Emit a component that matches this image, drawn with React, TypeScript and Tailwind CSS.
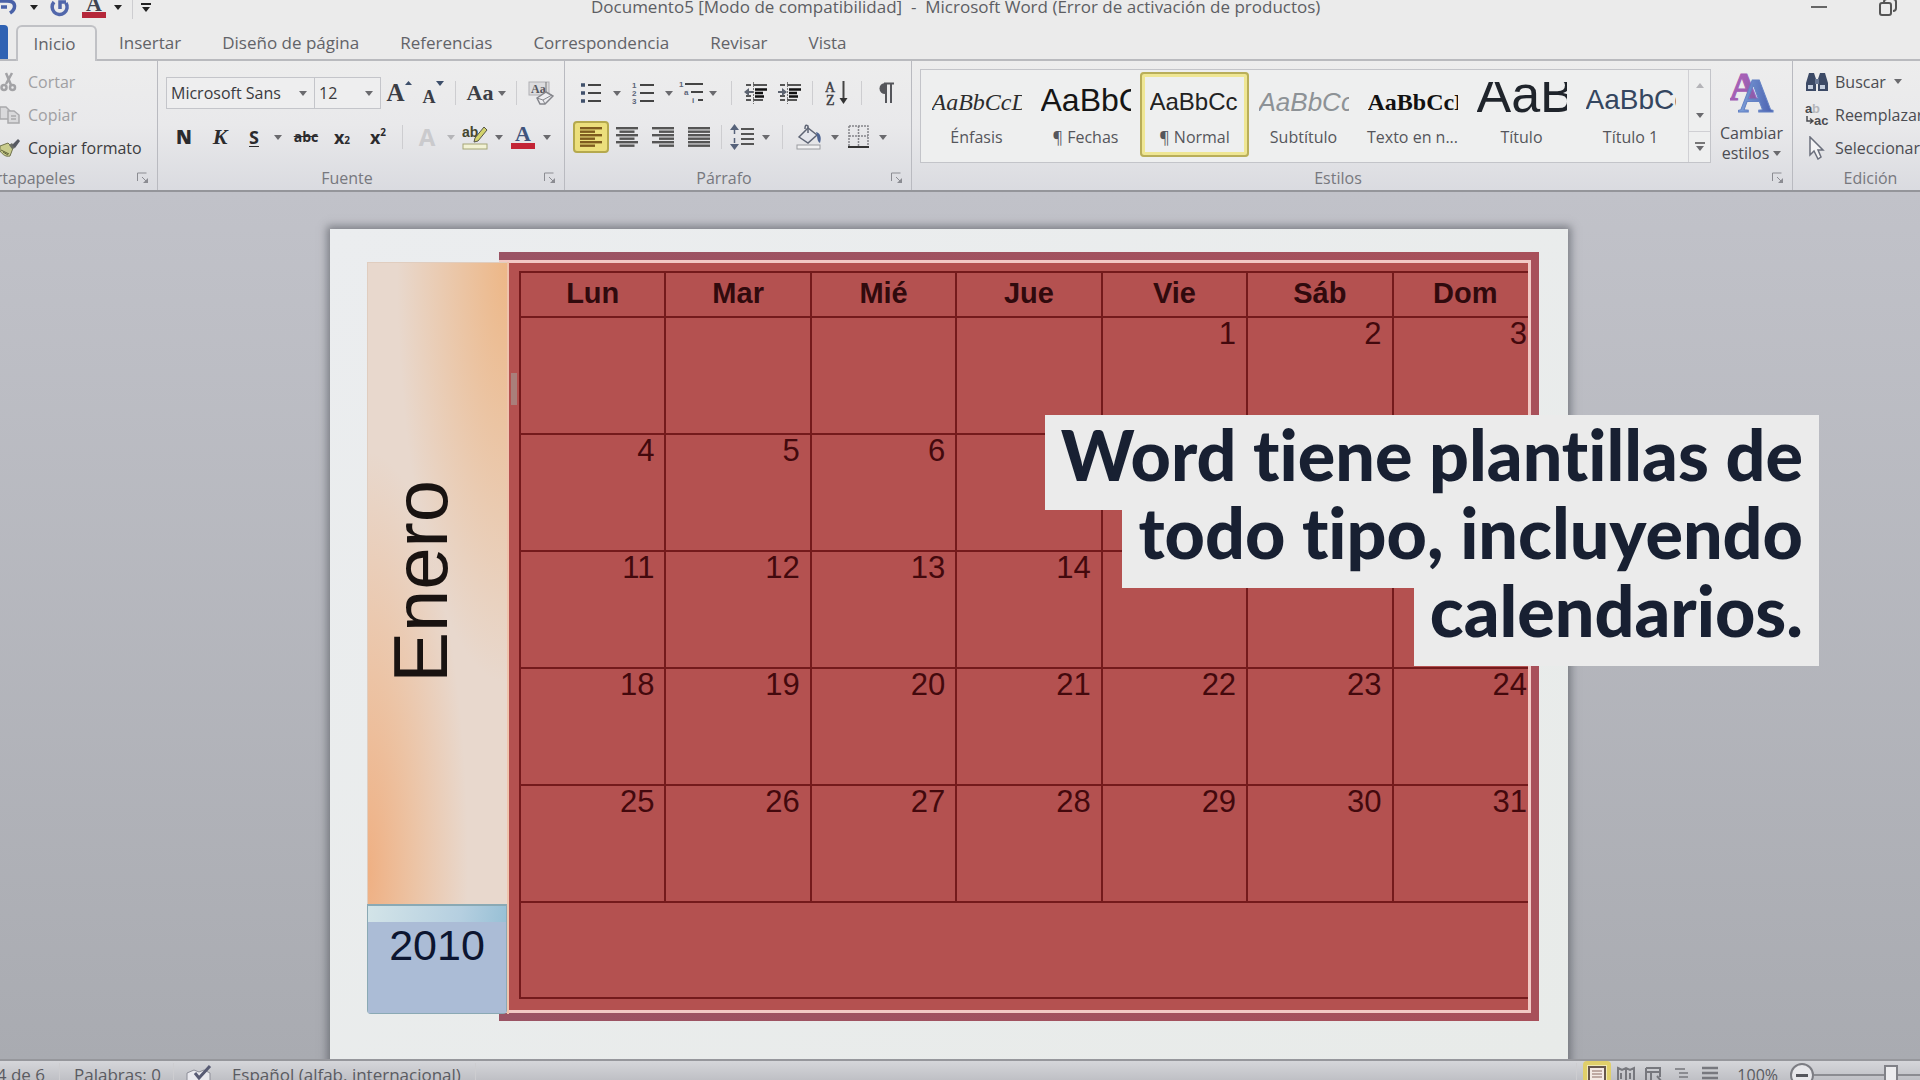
import type { ReactNode } from "react";
import clsx from "clsx";

const week = ["Lun", "Mar", "Mié", "Jue", "Vie", "Sáb", "Dom"];
const firstOffset = 4;
const rows = Array.from({ length: 5 }, (_, r) =>
  Array.from({ length: 7 }, (_, c) => {
    const day = r * 7 + c - firstOffset + 1;
    return day > 0 ? String(day) : "";
  })
);

const tabs = ["Insertar", "Diseño de página", "Referencias", "Correspondencia", "Revisar", "Vista"];

const styles = [
  { name: "Énfasis", sample: "AaBbCcDd", look: "font-['Liberation_Serif',serif] italic text-[24px] leading-10 text-[#2c2c2c]" },
  { name: "¶ Fechas", sample: "AaBbCc", look: "text-[32px] leading-9 text-[#151515]" },
  { name: "¶ Normal", sample: "AaBbCc", look: "text-[24px] leading-10 text-[#222]", active: true },
  { name: "Subtítulo", sample: "AaBbCc", look: "italic text-[26px] leading-10 text-[#8d9296]" },
  { name: "Texto en n...", sample: "AaBbCcDd", look: "font-['Liberation_Serif',serif] font-bold text-[24px] leading-10 text-[#111]" },
  { name: "Título", sample: "AaBb", look: "text-[52px] leading-6 text-[#1f242b]" },
  { name: "Título 1", sample: "AaBbCc", look: "text-[28px] leading-9 text-[#34465f]" },
];

function Arrow({ className = "text-[#6a6a6e]" }: { className?: string }) {
  return (
    <svg viewBox="0 0 8 5" className={clsx("w-2 h-[5px] shrink-0", className)} fill="currentColor" aria-hidden="true">
      <path d="M0 0h8L4 5z" />
    </svg>
  );
}

function Tool({ label, className = "w-9", active, children }: { label: string; className?: string; active?: boolean; children: ReactNode }) {
  return (
    <button
      aria-label={label}
      className={clsx(
        "h-8 shrink-0 flex items-center justify-center rounded-sm",
        active && "border-2 border-[#b5a94e] bg-[#ecdf7c]",
        className
      )}
    >
      {children}
    </button>
  );
}

function Split({ label, className = "w-12", arrow, children }: { label: string; className?: string; arrow?: string; children: ReactNode }) {
  return (
    <button aria-label={label} className={clsx("h-8 shrink-0 flex items-center", className)}>
      <span className="flex-1 flex items-center justify-center">{children}</span>
      <span className="w-4 flex justify-center">
        <Arrow className={arrow} />
      </span>
    </button>
  );
}

function Sep({ className = "mx-2" }: { className?: string }) {
  return <span className={clsx("w-px h-6 shrink-0 bg-[#cdcdd0]", className)} />;
}

function Group({ title, className, children }: { title: string; className: string; children: ReactNode }) {
  return (
    <section aria-label={title} className={clsx("flex flex-col border-r border-[#b9bac0] overflow-hidden", className)}>
      <div className="flex-1">{children}</div>
      <div className="h-6 shrink-0 flex items-center">
        <span className="flex-1 text-center text-[#77787e]">{title}</span>
        <Launcher title={title} />
      </div>
    </section>
  );
}

function Launcher({ title }: { title: string }) {
  return (
    <button aria-label={"Opciones de " + title} className="w-7 flex justify-center shrink-0">
      <svg viewBox="0 0 12 12" className="w-3 h-3" fill="none" stroke="#8b8c92" aria-hidden="true">
        <path d="M.5 9V1h9M5 5l4 4" />
        <path d="M11 6v5H6z" fill="#8b8c92" stroke="none" />
      </svg>
    </button>
  );
}

function Lines({ kind, color = "#555" }: { kind: "left" | "center" | "right" | "full"; color?: string }) {
  return (
    <svg viewBox="0 0 22 20" className="w-[22px] h-5" fill={color} aria-hidden="true">
      {[0, 1, 2, 3, 4, 5].map((i) => {
        const w = kind === "full" || i % 2 === 0 ? 22 : 15;
        const x = kind === "right" ? 22 - w : kind === "center" ? (22 - w) / 2 : 0;
        return <rect key={i} x={x} y={i * 3.5} width={w} height="2.4" />;
      })}
    </svg>
  );
}

function Indent({ out }: { out?: boolean }) {
  return (
    <svg viewBox="0 0 24 24" className="w-6 h-6" aria-hidden="true">
      <path d="M2 4h5M9 4h14M2 19h5M9 19h10M2 15h5" stroke="#555" strokeWidth="2" />
      <path d="M11 8.500h12M11 12h8M11 15.500h9" stroke="#111" strokeWidth="2.500" />
      <path d="M9.500 1v22" stroke="#777" strokeDasharray="2 1" />
      <path d={out ? "M0 11l5-4v3h4v2H5v3z" : "M9 11L4 7v3H0v2h4v3z"} fill="#5c6370" />
    </svg>
  );
}

function Clipboard() {
  return (
    <section aria-label="Portapapeles" className="w-[158px] shrink-0 flex flex-col border-r border-[#b9bac0] overflow-hidden">
      <div className="flex-1 pt-1">
        <button className="h-[33px] flex items-center gap-2 text-[#a0a0a3]">
          <svg viewBox="0 0 20 20" className="w-5 h-5" fill="none" stroke="#a3a3a6" strokeWidth="2.500" aria-hidden="true">
            <path d="M6 1l5 12M12 1L6 12" />
            <circle cx="4" cy="15.500" r="2.500" />
            <circle cx="12.500" cy="15.500" r="2.500" />
          </svg>
          Cortar
        </button>
        <button className="h-[33px] flex items-center gap-2 text-[#a0a0a3]">
          <svg viewBox="0 0 20 20" className="w-5 h-5" fill="#d9d9db" stroke="#a9a9ac" strokeWidth="1.500" aria-hidden="true">
            <path d="M0 2h6l4 4v8H0z" />
            <path d="M8 6h6l5 4v8H8zM11 11h5M11 14h5" />
          </svg>
          Copiar
        </button>
        <button className="h-[33px] flex items-center gap-2 text-[#3c3c40]">
          <svg viewBox="0 0 20 20" className="w-5 h-5" aria-hidden="true">
            <path d="M0 8l8-3 5 5-3 8c-4 1-7-1-10-5z" fill="#c9cc8d" stroke="#70724c" />
            <path d="M1 12l8 4M3 14l5 3" stroke="#5d6135" />
            <path d="M9 7l3 4 3-1-3-5z" fill="#6a6d64" />
            <path d="M12 7l6-6 2 2-5 7z" fill="#565960" />
          </svg>
          Copiar formato
        </button>
      </div>
      <div className="h-6 flex items-center justify-between">
        <span className="w-[75px] flex justify-end text-[#77787e]">Portapapeles</span>
        <Launcher title="Portapapeles" />
      </div>
    </section>
  );
}

function FontGroup() {
  return (
    <Group title="Fuente" className="w-[407px] shrink-0">
      <div className="pt-4 pl-2 flex flex-col gap-3">
        <div className="flex items-center">
          <div className="relative w-[149px]">
            <select aria-label="Fuente" className="appearance-none w-full h-8 pl-1 border border-[#c4c5ca] bg-[#eeeeef] text-[#3a3a3e]">
              <option>Microsoft Sans</option>
            </select>
            <span className="absolute right-2 top-3.5 pointer-events-none">
              <Arrow />
            </span>
          </div>
          <div className="relative w-[66px]">
            <select aria-label="Tamaño" className="appearance-none w-full h-8 pl-1 border border-l-0 border-[#c4c5ca] bg-[#eeeeef] text-[#3a3a3e]">
              <option>12</option>
            </select>
            <span className="absolute right-2 top-3.5 pointer-events-none">
              <Arrow />
            </span>
          </div>
          <Tool label="Agrandar fuente">
            <span className="font-['Liberation_Serif',serif] font-bold text-[25px] leading-6 text-[#3b3d44]">A</span>
            <span className="self-start pt-1 text-[#3d4f6b]">
              <svg viewBox="0 0 7 4" className="w-[7px] h-1" fill="currentColor" aria-hidden="true">
                <path d="M0 4h7L3.500 0z" />
              </svg>
            </span>
          </Tool>
          <Tool label="Encoger fuente" className="w-8">
            <span className="font-['Liberation_Serif',serif] font-bold text-[18px] leading-6 pt-2 text-[#3b3d44]">A</span>
            <span className="self-start pt-1">
              <Arrow className="text-[#3d4f6b]" />
            </span>
          </Tool>
          <Sep className="mx-1.5" />
          <Split label="Cambiar mayúsculas">
            <span className="pl-1 font-['Liberation_Serif',serif] font-bold text-[22px] text-[#3b3d44]">Aa</span>
          </Split>
          <Sep className="mx-1.5" />
          <Tool label="Borrar formato" className="w-9">
            <svg viewBox="0 0 26 26" className="w-6.5 h-6.5" aria-hidden="true">
              <rect x="1" y="2" width="20" height="13" fill="#dcdcde" stroke="#b0b0b4" />
              <text x="3" y="13" fontSize="12" fontWeight="bold" fontFamily="Liberation Serif, serif" fill="#55565c">Aa</text>
              <path d="M18 2v12" stroke="#777" />
              <path d="M9 18l9-6 7 4-8 8h-5z" fill="#ededf0" stroke="#85868c" strokeWidth="1.500" />
              <path d="M9 18l6 2 2 4M15 20l9-5" fill="none" stroke="#85868c" />
            </svg>
          </Tool>
        </div>
        <div className="flex items-center text-[#2b2b2e]">
          <Tool label="Negrita">
            <b className="font-['Open_Sans',sans-serif] font-extrabold text-[19px]">N</b>
          </Tool>
          <Tool label="Cursiva">
            <i className="font-['Liberation_Serif',serif] font-bold text-[22px]">K</i>
          </Tool>
          <Split label="Subrayado">
            <u className="font-bold text-[18px] underline-offset-2">S</u>
          </Split>
          <Tool label="Tachado">
            <s className="pl-1 font-bold text-[14px]">abc</s>
          </Tool>
          <Tool label="Subíndice">
            <b className="pl-1 text-[18px]">x</b>
            <b className="text-[10px] self-end pb-0.5">2</b>
          </Tool>
          <Tool label="Superíndice">
            <b className="pl-1 text-[18px]">x</b>
            <b className="text-[10px] self-start">2</b>
          </Tool>
          <Sep />
          <Split label="Efectos de texto" arrow="text-[#b5b5b8]">
            <b className="text-[24px] leading-8 text-[#cacacd]">A</b>
          </Split>
          <Split label="Color de resaltado">
            <svg viewBox="0 0 26 26" className="w-6.5 h-6.5" aria-hidden="true">
              <text x="0" y="13" fontSize="14" fontWeight="bold" fontFamily="Liberation Sans, sans-serif" fill="#44462f">ab</text>
              <path d="M22 3l3 3-9 11-4 1 1-4z" fill="#d3d36c" stroke="#55554a" />
              <rect x="1" y="20" width="24" height="5" fill="#f2f2d4" stroke="#a5a677" />
            </svg>
          </Split>
          <Split label="Color de fuente">
            <svg viewBox="0 0 26 26" className="w-6.5 h-6.5" aria-hidden="true">
              <text x="13" y="17" fontSize="22" fontWeight="bold" textAnchor="middle" fontFamily="Liberation Serif, serif" fill="#40547c">A</text>
              <rect x="1" y="19" width="24" height="6" fill="#c32436" />
            </svg>
          </Split>
        </div>
      </div>
    </Group>
  );
}

function ParagraphGroup() {
  return (
    <Group title="Párrafo" className="w-[347px] shrink-0">
      <div className="pt-4 pl-2 flex flex-col gap-3">
        <div className="flex items-center">
          <Split label="Viñetas" className="w-13">
            <svg viewBox="0 0 22 22" className="w-5.5 h-5.5" aria-hidden="true">
              <path d="M8 3h13M8 11h13M8 19h13" stroke="#444" strokeWidth="2" />
              <path d="M1 3h4M1 11h4M1 19h4" stroke="#40506b" strokeWidth="3.500" />
            </svg>
          </Split>
          <Split label="Numeración" className="w-13">
            <svg viewBox="0 0 24 24" className="w-6 h-6" aria-hidden="true">
              <path d="M9 4h14M9 12h14M9 20h14" stroke="#444" strokeWidth="2" />
              <g fontSize="8" fontWeight="bold" fontFamily="Liberation Sans, sans-serif" fill="#5b6479">
                <text x="1" y="7">1</text>
                <text x="1" y="15">2</text>
                <text x="1" y="23">3</text>
              </g>
            </svg>
          </Split>
          <Split label="Lista multinivel" className="w-11">
            <svg viewBox="0 0 24 24" className="w-6 h-6" aria-hidden="true">
              <path d="M6 3h18M12 11h12M19 19h5" stroke="#444" strokeWidth="2" />
              <g fontSize="8" fontWeight="bold" fontFamily="Liberation Sans, sans-serif" fill="#5b6479">
                <text x="0" y="6">1</text>
                <text x="5" y="14">a</text>
                <text x="13" y="22">i</text>
              </g>
            </svg>
          </Split>
          <Sep className="ml-2.5 mr-1.5" />
          <Tool label="Disminuir sangría">
            <Indent out />
          </Tool>
          <Tool label="Aumentar sangría" className="w-8">
            <Indent />
          </Tool>
          <Sep className="mx-1.5" />
          <Tool label="Ordenar">
            <svg viewBox="0 0 24 26" className="w-6 h-6.5" aria-hidden="true">
              <g fontSize="14" fontFamily="Liberation Serif, serif" fill="#3d3d44" stroke="#3d3d44" strokeWidth=".4">
                <text x="0" y="12">A</text>
                <text x="1" y="25">Z</text>
              </g>
              <path d="M18.500 1v19" stroke="#444" strokeWidth="2" />
              <path d="M14.500 18h8l-4 6z" fill="#333" />
            </svg>
          </Tool>
          <Sep className="mx-1.5" />
          <Tool label="Mostrar todo" className="w-9">
            <svg viewBox="0 0 18 22" className="w-4.5 h-5.5" aria-hidden="true">
              <path d="M8 1a5.500 5.500 0 000 11z" fill="#55565b" />
              <path d="M7 1.500h10M9 1v20M14 1v20" stroke="#55565b" strokeWidth="2" />
            </svg>
          </Tool>
        </div>
        <div className="flex items-center">
          <Tool label="Alinear a la izquierda" active>
            <Lines kind="left" color="#7f5c1f" />
          </Tool>
          <Tool label="Centrar">
            <Lines kind="center" />
          </Tool>
          <Tool label="Alinear a la derecha">
            <Lines kind="right" />
          </Tool>
          <Tool label="Justificar">
            <Lines kind="full" />
          </Tool>
          <Sep className="mx-1" />
          <Split label="Interlineado">
            <svg viewBox="0 0 24 26" className="w-6 h-6.5" aria-hidden="true">
              <path d="M11 5h13M11 10h13M11 15h13M11 20h13" stroke="#555" strokeWidth="2" />
              <path d="M4.500 5v16" stroke="#56627a" strokeWidth="1.500" strokeDasharray="5 4" />
              <path d="M0 6h9L4.500 0zM0 20h9l-4.500 6z" fill="#56627a" />
            </svg>
          </Split>
          <Sep />
          <Split label="Sombreado" className="w-13">
            <svg viewBox="0 0 26 26" className="w-6.5 h-6.5" aria-hidden="true">
              <path d="M3 13l9-9 9 7-9 8z" fill="#e4e6ec" stroke="#5e6474" strokeWidth="1.500" />
              <path d="M12 9V2c-3-2-3 1-3 3" fill="none" stroke="#5e6474" strokeWidth="1.500" />
              <path d="M20 8c4 1 6 5 4 11-2-1-3-4-3-8z" fill="#4d6391" />
              <rect x="1" y="21" width="23" height="4" fill="#f1f1f2" stroke="#9a9ba0" />
            </svg>
          </Split>
          <Split label="Bordes" className="w-12">
            <svg viewBox="0 0 22 24" className="w-5.5 h-6" fill="none" aria-hidden="true">
              <path d="M1 1h19v20M1 1v20M10.500 1v20M1 11h19" stroke="#85858a" strokeWidth="1.500" strokeDasharray="2 1" />
              <path d="M0 22h21" stroke="#333" strokeWidth="2" />
            </svg>
          </Split>
        </div>
      </div>
    </Group>
  );
}

function StylesGroup() {
  return (
    <Group title="Estilos" className="flex-1 min-w-0">
      <div className="pl-2 pt-2 flex">
        <div className="flex-1 min-w-0 flex border border-[#c3c4c9] bg-[#eeefef]">
          <div className="flex-1 min-w-0 flex overflow-hidden py-0.5 pl-px">
            {styles.map((s) => (
              <button
                key={s.name}
                className={clsx(
                  "w-[109px] h-[85px] shrink-0 flex flex-col items-center pt-2.5",
                  s.active && "rounded-sm outline-2 -outline-offset-2 outline-[#b9ae5a] inset-ring-5 inset-ring-[#efe694]"
                )}
              >
                <span className={clsx("w-[90px] h-8 overflow-hidden text-left whitespace-nowrap", s.look.includes("Serif") ? "" : "font-['Liberation_Sans',sans-serif]", s.look)}>
                  {s.sample}
                </span>
                <span className="pt-3 text-[#55565b] whitespace-nowrap">{s.name}</span>
              </button>
            ))}
          </div>
          <div className="w-[22px] shrink-0 flex flex-col border-l border-[#d0d0d4]">
            <button aria-label="Fila anterior" className="flex-1 flex items-center justify-center">
              <Arrow className="rotate-180 text-[#b4b4b8]" />
            </button>
            <button aria-label="Fila siguiente" className="flex-1 flex items-center justify-center border-b border-[#cfcfd3]">
              <Arrow />
            </button>
            <button aria-label="Más estilos" className="flex-1 flex flex-col gap-0.5 items-center justify-center">
              <span className="w-2.5 h-0.5 bg-[#777]" />
              <Arrow />
            </button>
          </div>
        </div>
        <button className="w-[81px] shrink-0 flex flex-col items-center text-[#4b4c52] leading-5">
          <svg viewBox="0 0 44 44" className="w-11 h-11 mb-2.5" aria-hidden="true">
            <defs>
              <linearGradient id="pinkA" x1="0" x2="1" y1="0" y2="1">
                <stop stopColor="#c065c4" />
                <stop offset="1" stopColor="#7d5aa0" />
              </linearGradient>
              <linearGradient id="blueA" x1="0" x2="1">
                <stop stopColor="#7fa3dc" />
                <stop offset="1" stopColor="#4a5fae" />
              </linearGradient>
            </defs>
            <g fontFamily="Liberation Serif, serif" fontWeight="bold">
              <text x="-1" y="31" fontSize="41" fill="url(#pinkA)" stroke="#a45fb5" strokeWidth="1">A</text>
              <text x="8" y="43" fontSize="49" fill="url(#blueA)" stroke="#6482c4" strokeWidth="1">A</text>
            </g>
          </svg>
          <span>Cambiar</span>
          <span className="flex items-center gap-1">
            estilos <Arrow />
          </span>
        </button>
      </div>
    </Group>
  );
}

function EditGroup() {
  return (
    <section aria-label="Edición" className="w-[127px] shrink-0 overflow-hidden">
      <div className="w-[155px] pt-1 pl-3 text-[#4b4c52]">
        <button className="h-[33px] flex items-center gap-1.5">
          <svg viewBox="0 0 24 22" className="w-6 h-5.5" aria-hidden="true">
            <path d="M4 2h5l2 6v12H1v-8zM15 2h5l3 10v8H13V8z" fill="#3c4a66" />
            <path d="M10 8h4v5h-4z" fill="#6b7a96" />
            <path d="M3 14h5v4H3zM15 14h5v4h-5z" fill="#c4cede" />
          </svg>
          Buscar
          <span className="pl-0.5">
            <Arrow />
          </span>
        </button>
        <button className="h-[33px] flex items-center gap-1.5">
          <svg viewBox="0 0 24 24" className="w-6 h-6" aria-hidden="true">
            <g fontSize="13" fontWeight="bold" fontFamily="Liberation Sans, sans-serif" fill="#4a4b50">
              <text x="0" y="10">a</text>
              <text x="7" y="10" fill="#b5b6ba">b</text>
              <text x="9" y="22">ac</text>
            </g>
            <path d="M2 13v5h5M5 15.500l3 2.500-3 2.500" fill="none" stroke="#4a4b50" strokeWidth="1.500" />
          </svg>
          Reemplazar
        </button>
        <button className="h-[33px] flex items-center gap-1.5">
          <svg viewBox="0 0 24 24" className="w-6 h-6" aria-hidden="true">
            <path d="M5 1v18l4-4 4 8 3-2-3-7h5z" fill="#f4f4f5" stroke="#6b6f7c" strokeWidth="1.500" />
          </svg>
          Seleccionar
        </button>
        <div className="h-6 mt-0.5 pr-3 flex items-center justify-center text-[#77787e]">Edición</div>
      </div>
    </section>
  );
}

function TitleBar() {
  return (
    <header className="relative h-[25px] shrink-0 overflow-hidden">
      <div className="-mt-2 h-[30px] flex items-center justify-between">
        <div className="flex items-center">
          <button aria-label="Deshacer" className="w-[30px] flex">
            <svg viewBox="0 0 20 20" className="w-5 h-5" fill="none" stroke="#4a62a8" strokeWidth="3.500" aria-hidden="true">
              <path d="M0 4h7c10 0 9 8 3 12M1 10h6" />
            </svg>
          </button>
          <Arrow className="text-[#222]" />
          <button aria-label="Rehacer" className="w-11 flex justify-center">
            <svg viewBox="0 0 20 20" className="w-5 h-5" fill="none" stroke="#5167ab" strokeWidth="3.500" aria-hidden="true">
              <path d="M4 5a7.500 7.500 0 1012 1M10 12V5h6" />
            </svg>
          </button>
          <button aria-label="Color de fuente" className="w-6 flex">
            <svg viewBox="0 0 24 26" className="w-6 h-6.5" aria-hidden="true">
              <text x="12" y="17" fontSize="22" fontWeight="bold" textAnchor="middle" fontFamily="Liberation Serif, serif" fill="#40444f">A</text>
              <rect x="0" y="18" width="24" height="6" fill="#b5283a" />
            </svg>
          </button>
          <span className="pl-2">
            <Arrow className="text-[#222]" />
          </span>
          <Sep className="ml-2.5 mr-2" />
          <button aria-label="Personalizar barra" className="flex flex-col items-center gap-0.5">
            <span className="w-2.5 h-0.5 bg-[#222]" />
            <Arrow className="text-[#222]" />
          </button>
        </div>
        <h1 className="flex-1 pl-[440px] text-[17px] text-[#5d5e63] whitespace-pre">Documento5 [Modo de compatibilidad]  -  Microsoft Word (Error de activación de productos)</h1>
        <div className="flex items-center gap-[52px] pr-[23px]">
          <button aria-label="Minimizar" className="w-4 h-4 flex items-center">
            <span className="w-4 h-0.5 bg-[#666]" />
          </button>
          <button aria-label="Restaurar">
            <svg viewBox="0 0 18 18" className="w-4.5 h-4.5" fill="none" stroke="#555" strokeWidth="2" aria-hidden="true">
              <rect x="1" y="5" width="11" height="12" rx="2" />
              <path d="M5 4c0-2 1-3 3-3h6c2 0 3 1 3 3v6c0 2-1 3-3 3" />
            </svg>
          </button>
        </div>
      </div>
    </header>
  );
}

function Calendar() {
  return (
    <div className="w-[1238px] h-[840px] mx-auto pt-[23px] pl-[37px] flex font-['Liberation_Sans',sans-serif] bg-gradient-to-br from-[#ebedef] to-[#e8ebe9] shadow-[0_0_8px_3px_rgba(70,72,80,0.55)]">
      <div className="relative z-10 w-[142px] h-[752px] mt-2.5 shrink-0 flex flex-col border-r-2 border-[#efc3ac]">
        <div className="h-[642px] pr-[34px] pb-1 flex items-center justify-center border-l border-t border-[#e0cdbf] bg-[radial-gradient(ellipse_110px_420px_at_100%_0%,#edb787_0%,rgba(236,190,150,0.7)_45%,rgba(232,216,205,0)_100%),radial-gradient(ellipse_100px_420px_at_0%_95%,#efb083_0%,rgba(238,186,146,0.7)_45%,rgba(232,216,205,0)_100%)] bg-[#e8d8cd]">
          <span className="[writing-mode:vertical-rl] rotate-180 text-[76px] leading-none text-[#191311]">Enero</span>
        </div>
        <div className="h-[110px] rounded-b-sm border border-t-2 border-[#8aa9b4] bg-[linear-gradient(100deg,#d3e4e8_0%,#b5cfe0_60%,#8ebbd2_100%)]">
          <div className="mt-4 h-[91px] text-center text-[43px] leading-[46px] bg-[#abbcd6] text-[#0c1530]">2010</div>
        </div>
      </div>
      <div className="w-[1040px] h-[769px] -ml-2.5 py-2 pr-2 bg-[linear-gradient(90deg,#9a5364,#a8505a)]">
        <div className="h-full border-[3px] border-l-0 border-[#f2c9c5] flex">
          <div className="w-2.5 shrink-0" />
          <div className="relative flex-1 min-w-0 overflow-hidden pt-2 pl-2.5 bg-[#b45150]">
            {/* table move handle */}
            <span className="absolute left-0.5 top-[110px] w-1.5 h-8 bg-[#a97f7b]" />
            <table className="w-[1020px] table-fixed border-collapse text-[#43090d]">
              <thead>
                <tr className="h-[45px]">
                  {week.map((d) => (
                    <th key={d} className="border-2 border-[#741a1c] p-0 pb-1 text-[29px] leading-8 font-bold text-[#300a0d]">{d}</th>
                  ))}
                </tr>
              </thead>
              <tbody>
                {rows.map((r, i) => (
                  <tr key={i} className="h-[117px]">
                    {r.map((d, j) => (
                      <td key={j} className="border-2 border-[#741a1c] p-0 pr-2.5 text-right align-top text-[31px] leading-8">{d}</td>
                    ))}
                  </tr>
                ))}
                <tr className="h-24">
                  <td colSpan={7} className="border-2 border-[#741a1c]" />
                </tr>
              </tbody>
            </table>
          </div>
        </div>
      </div>
    </div>
  );
}

function Caption() {
  return (
    <div className="absolute z-20 right-[101px] top-[415px] font-['Lato',sans-serif] font-black text-[70px] leading-[78px] whitespace-nowrap [font-variant-ligatures:none] text-[#182032]">
      <p className="w-fit ml-auto px-4 pb-[17px] bg-[#ebebeb]">Word tiene plantillas de</p>
      <p className="w-fit ml-auto px-4 pb-[17px] -mt-[17px] bg-[#ebebeb]">todo tipo, incluyendo</p>
      <p className="w-fit ml-auto px-4 pb-[17px] -mt-[17px] bg-[#ebebeb]">calendarios.</p>
    </div>
  );
}

function StatusBar() {
  return (
    <footer className="relative z-10 h-[21px] shrink-0 overflow-hidden border-t-2 border-[#96979c] bg-gradient-to-b from-[#d5d6da] to-[#bfc0c5] text-[17px] text-[#5a5b61]">
      <div className="h-7 flex items-center">
        <span className="w-[45px] flex justify-end whitespace-nowrap">Página: 4 de 6</span>
        <Sep className="mx-3.5 bg-[#9c9da2]" />
        <span>Palabras: 0</span>
        <Sep className="mx-3 bg-[#9c9da2]" />
        <svg viewBox="0 0 26 24" className="w-6.5 h-6" aria-hidden="true">
          <path d="M1 10l7-3 5 2 5-2 6 3v12H1z" fill="#e9e9ee" stroke="#8d8e98" />
          <path d="M9 10l4 5L24 3" fill="none" stroke="#585b74" strokeWidth="3" />
        </svg>
        <span className="pl-5">Español (alfab. internacional)</span>
        <Sep className="ml-3.5 bg-[#9c9da2]" />
        <div className="ml-auto flex items-center">
          <Sep className="mr-1.5 bg-[#9c9da2]" />
          <button aria-label="Diseño de impresión" className="w-7 h-7 mr-1.5 flex items-center justify-center rounded-sm border-4 border-[#e0cf6a] bg-[#f0e9b4]">
            <svg viewBox="0 0 18 18" className="w-4.5 h-4.5" aria-hidden="true">
              <path d="M1 1h16v16H1z" fill="#f3e9e4" stroke="#66564c" strokeWidth="2" />
              <path d="M4 5h10M4 8h10M4 11h10" stroke="#8b6a62" />
            </svg>
          </button>
          <button aria-label="Lectura" className="w-7">
            <svg viewBox="0 0 18 18" className="w-4.5 h-4.5" fill="none" stroke="#77787e" strokeWidth="2" aria-hidden="true">
              <path d="M1 2l4 2 4-2 4 2 4-2v13l-4 1-4-1-4 1-4-1zM9 2v14M4 7v6M13 7v6" />
            </svg>
          </button>
          <button aria-label="Diseño web" className="w-7">
            <svg viewBox="0 0 18 18" className="w-4.5 h-4.5" fill="none" stroke="#77787e" strokeWidth="2" aria-hidden="true">
              <path d="M1 2h14v9M1 2v13h8M1 6h14M6 6v9M12 10l5 6" />
            </svg>
          </button>
          <button aria-label="Esquema" className="w-7">
            <svg viewBox="0 0 18 18" className="w-4.5 h-4.5" fill="none" stroke="#8a8b90" strokeWidth="2" aria-hidden="true">
              <path d="M2 3h10M6 7h9M6 11h9M2 15h10" />
            </svg>
          </button>
          <button aria-label="Borrador" className="w-9">
            <svg viewBox="0 0 18 18" className="w-4.5 h-4.5" fill="none" stroke="#77787e" strokeWidth="2.500" aria-hidden="true">
              <path d="M1 2h16M1 7h16M1 12h16M1 17h16" />
            </svg>
          </button>
          <span className="text-[16px]">100%</span>
          <button aria-label="Alejar" className="w-6 h-6 ml-3 flex items-center justify-center rounded-full border-2 border-[#7c7d83] bg-[#e7e7ea]">
            <span className="w-3 h-[3px] bg-[#55565c]" />
          </button>
          <div className="w-[106px] flex items-center overflow-hidden">
            <input
              type="range"
              aria-label="Zoom"
              defaultValue="50"
              className="w-[154px] shrink-0 h-6 appearance-none bg-[linear-gradient(#8b8c91,#8b8c91)] bg-[length:100%_2px] bg-center bg-no-repeat [&::-webkit-slider-thumb]:appearance-none [&::-webkit-slider-thumb]:w-3.5 [&::-webkit-slider-thumb]:h-5 [&::-webkit-slider-thumb]:rounded-b-md [&::-webkit-slider-thumb]:border-2 [&::-webkit-slider-thumb]:border-[#808187] [&::-webkit-slider-thumb]:bg-[#ececee]"
            />
          </div>
        </div>
      </div>
    </footer>
  );
}

export default function App() {
  return (
    <div className="relative h-screen flex flex-col overflow-hidden bg-[#ebebeb] font-['Open_Sans',sans-serif] text-[16px] leading-[22px]">
      <TitleBar />
      <nav className="h-9 shrink-0 flex text-[17px] text-[#626368] border-b-2 border-[#b9babe]">
        <button aria-label="Archivo" className="w-2 rounded-tr-sm bg-[#2f62b3]" />
        <button className="w-[81px] ml-2 -mb-0.5 pr-1 rounded-t-md border-2 border-b-0 border-[#c0c1c5] bg-[#ededed]">Inicio</button>
        <div className="pl-[22px] flex gap-[41px] pt-0.5">
          {tabs.map((t) => (
            <button key={t}>{t}</button>
          ))}
        </div>
      </nav>
      <div className="h-[131px] shrink-0 flex overflow-hidden border-b-2 border-[#94959a] bg-gradient-to-b from-[#ededed] via-[#e9e9eb] to-[#dadbe0]">
        <Clipboard />
        <FontGroup />
        <ParagraphGroup />
        <StylesGroup />
        <EditGroup />
      </div>
      <main className="flex-1 min-h-0 overflow-hidden pt-[37px] pr-[22px] bg-gradient-to-b from-[#c1c2c9] to-[#a9abb1]">
        <Calendar />
      </main>
      <StatusBar />
      <Caption />
    </div>
  );
}
